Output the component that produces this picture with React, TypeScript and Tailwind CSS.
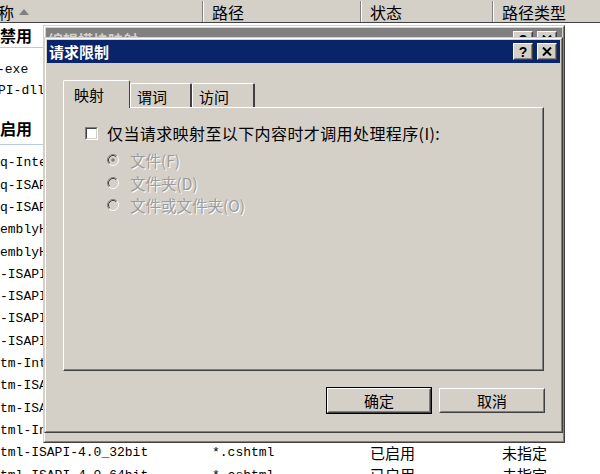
import React from "react";

const mono = "font-['Liberation_Mono','Noto_Sans_CJK_SC',monospace]";

function TitleBtn({ children }: { children: React.ReactNode }) {
  return (
    <div className="w-[20px] h-[17px] border border-t-white border-l-white border-r-[#404040] border-b-[#404040]">
      <div className="w-full h-full border border-t-[#d4d0c8] border-l-[#d4d0c8] border-r-[#808080] border-b-[#808080] bg-[#d4d0c8] flex items-center justify-center">
        {children}
      </div>
    </div>
  );
}

function HelpGlyph() {
  return (
    <span className="font-['Liberation_Sans',sans-serif] font-bold text-[14px] leading-[14px] text-black">?</span>
  );
}

function CloseGlyph() {
  return (
    <svg width="10" height="9" viewBox="0 0 10 9">
      <path d="M1 0.5 L9 8.5 M9 0.5 L1 8.5" stroke="#000" strokeWidth="2" />
    </svg>
  );
}

function Frame({ className, children }: { className: string; children: React.ReactNode }) {
  return (
    <div className={`absolute border border-t-[#d4d0c8] border-l-[#d4d0c8] border-r-[#404040] border-b-[#404040] ${className}`}>
      <div className="h-full border border-t-white border-l-white border-r-[#808080] border-b-[#808080] bg-[#d4d0c8] p-px flex flex-col">
        {children}
      </div>
    </div>
  );
}

function Button({ label, isDefault }: { label: string; isDefault?: boolean }) {
  const inner = (
    <div className="w-full h-full border border-t-white border-l-white border-r-[#404040] border-b-[#404040]">
      <div className="w-full h-full border border-t-[#d4d0c8] border-l-[#d4d0c8] border-r-[#808080] border-b-[#808080] flex items-center justify-center text-[15px] leading-[18px]">
        {label}
      </div>
    </div>
  );
  if (isDefault) {
    return <div className="w-[106px] h-[27px] border border-black">{inner}</div>;
  }
  return <div className="w-[106px] h-[25px]">{inner}</div>;
}

function Radio({ checked }: { checked?: boolean }) {
  return (
    <svg width="12" height="12" viewBox="0 0 12 12" className="shrink-0">
      <circle cx="6" cy="6" r="5" fill="#d4d0c8" />
      <path d="M9.89 2.11 A5.5 5.5 0 0 0 2.11 9.89" stroke="#808080" fill="none" />
      <path d="M2.11 9.89 A5.5 5.5 0 0 0 9.89 2.11" stroke="#ffffff" fill="none" />
      <path d="M9.18 2.82 A4.5 4.5 0 0 0 2.82 9.18" stroke="#404040" fill="none" />
      <path d="M2.82 9.18 A4.5 4.5 0 0 0 9.18 2.82" stroke="#d4d0c8" fill="none" />
      {checked && <circle cx="6" cy="6" r="1.8" fill="#808080" />}
    </svg>
  );
}

const rows2 = [
  "q-Integrated-4.0",
  "q-ISAPI-4.0_32bit",
  "q-ISAPI-4.0_64bit",
  "emblyHandler-Integrated",
  "emblyHandler-ISAPI",
  "-ISAPI-2.0",
  "-ISAPI-2.0-64",
  "-ISAPI-4.0_32bit",
  "-ISAPI-4.0_64bit",
  "tm-Integrated-4.0",
  "tm-ISAPI-4.0_32bit",
  "tm-ISAPI-4.0_64bit",
  "tml-Integrated-4.0",
];

export default function App() {
  return (
    <div className="relative w-[600px] h-[474px] overflow-hidden bg-white text-black font-['Noto_Sans_CJK_SC',sans-serif]">
      {/* column header */}
      <div className="flex h-[23px] bg-[#d4d0c8] border-t border-t-[#d4d0c8] border-b border-b-[#404040] text-[16px] leading-[20px]">
        <div className="w-[203px] flex items-center border-r border-r-[#808080] overflow-hidden">
          <span className="ml-[-2px]">称</span>
          <svg width="10" height="6" viewBox="0 0 10 6" className="ml-[5px]">
            <path d="M5 0 L10 6 L0 6 Z" fill="#808080" />
          </svg>
        </div>
        <div className="w-[158px] flex items-center pl-[8px] border-l border-l-white border-r border-r-[#808080]">路径</div>
        <div className="w-[132px] flex items-center pl-[8px] border-l border-l-white border-r border-r-[#808080]">状态</div>
        <div className="flex-1 flex items-center pl-[8px] border-l border-l-white">路径类型</div>
      </div>

      {/* list */}
      <div className="flex flex-col">
        <div className="h-[25px] w-[300px] border-b border-b-[#b8cce4] pt-[2px] font-bold text-[16px] leading-[20px]">禁用</div>
        <div className={`flex flex-col pt-[11px] ${mono} text-[13px]`}>
          <div className="h-[21px] flex items-center whitespace-nowrap"><span className="ml-[-3px]">-exe</span></div>
          <div className="h-[21px] flex items-center whitespace-nowrap"><span className="ml-[-2px]">PI-dll</span></div>
        </div>
        <div className="h-[44px] w-[300px] border-b border-b-[#b8cce4] pt-[17px] font-bold text-[16px] leading-[20px]">启用</div>
        <div className={`flex flex-col pt-[7px] ${mono} text-[13px]`}>
          {rows2.map((r, i) => (
            <div key={i} className="h-[22.3px] flex items-center whitespace-nowrap">{r}</div>
          ))}
          {["tml-ISAPI-4.0_32bit", "tml-ISAPI-4.0_64bit"].map((r, i) => (
            <div key={i} className="h-[22.3px] flex items-center whitespace-nowrap">
              <div className="w-[203px]">{r}</div>
              <div className="w-[158px] pl-[9px]">*.cshtml</div>
              <div className="w-[132px] pl-[9px] font-['Noto_Sans_CJK_SC',sans-serif] text-[15px]">已启用</div>
              <div className="pl-[9px] font-['Noto_Sans_CJK_SC',sans-serif] text-[15px]">未指定</div>
            </div>
          ))}
        </div>
      </div>

      {/* background dialog: 编辑模块映射 */}
      <Frame className="left-[43px] top-[25px] w-[522px] h-[418px]">
        <div className="h-[23px] bg-[#808080] flex items-center pl-[2px] pr-[5px]">
          <span className="font-bold text-[15px] leading-[18px] text-[#d4d0c8] flex-1">编辑模块映射</span>
          <div className="flex gap-[4px]">
            <TitleBtn><HelpGlyph /></TitleBtn>
            <TitleBtn><CloseGlyph /></TitleBtn>
          </div>
        </div>
      </Frame>

      {/* foreground dialog: 请求限制 */}
      <Frame className="left-[44px] top-[37px] w-[519px] h-[396px]">
        <div className="h-[23px] bg-[#0a246a] flex items-center pl-[2px] pr-[3px]">
          <span className="font-bold text-[15px] leading-[18px] text-white flex-1">请求限制</span>
          <div className="flex gap-[4px]">
            <TitleBtn><HelpGlyph /></TitleBtn>
            <TitleBtn><CloseGlyph /></TitleBtn>
          </div>
        </div>
        <div className="flex flex-col pt-[17px] pl-[16px]">
          {/* tabs */}
          <div className="flex items-end h-[27px] text-[15px] leading-[18px]">
            <div className="relative z-10 w-[67px] h-[28px] mb-[-1px] bg-[#d4d0c8] border-t border-l border-t-white border-l-white border-r border-r-[#404040] rounded-t-[2px] pl-[10px] pt-[5px]">映射</div>
            <div className="w-[62px] h-[24px] border-t border-l border-t-white border-l-white border-r-2 border-r-[#404040] rounded-t-[2px] pl-[6px] pt-[4px]">谓词</div>
            <div className="w-[63px] h-[24px] border-t border-l border-t-white border-l-white border-r-2 border-r-[#404040] rounded-t-[2px] pl-[6px] pt-[4px]">访问</div>
          </div>
          {/* panel */}
          <div className="w-[481px] h-[264px] border-t border-l border-t-white border-l-white border-r border-b border-r-[#404040] border-b-[#404040]">
            <div className="w-full h-full border-r border-b border-r-[#808080] border-b-[#808080] flex flex-col pl-[21px] pt-[18px]">
              <div className="flex items-center h-[14px]">
                <div className="w-[13px] h-[13px] border border-t-[#808080] border-l-[#808080] border-r-white border-b-white shrink-0">
                  <div className="w-full h-full border border-t-[#404040] border-l-[#404040] border-r-[#d4d0c8] border-b-[#d4d0c8] bg-white" />
                </div>
                <span className="ml-[9px] text-[16px] leading-[18px] tracking-[0.4px] whitespace-nowrap">仅当请求映射至以下内容时才调用处理程序(I):</span>
              </div>
              <div className="flex flex-col pl-[22px] pt-[9px] text-[15.5px] leading-[18px] text-[#9c9c9c] [text-shadow:1px_1px_0_#ffffff]">
                <div className="flex items-center h-[22.5px]"><Radio checked /><span className="ml-[11px]">文件(F)</span></div>
                <div className="flex items-center h-[22.5px]"><Radio /><span className="ml-[11px]">文件夹(D)</span></div>
                <div className="flex items-center h-[22.5px]"><Radio /><span className="ml-[11px]">文件或文件夹(O)</span></div>
              </div>
            </div>
          </div>
          {/* buttons */}
          <div className="flex items-center gap-[7px] pl-[263px] mt-[16px] h-[27px]">
            <Button label="确定" isDefault />
            <Button label="取消" />
          </div>
        </div>
      </Frame>
    </div>
  );
}
